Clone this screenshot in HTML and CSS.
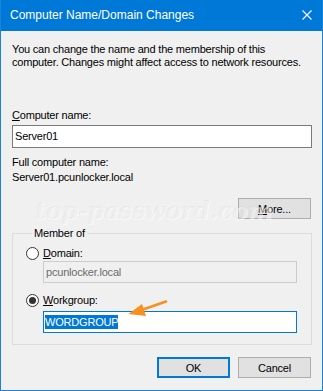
FILE: index.html
```html
<!DOCTYPE html>
<html lang="en">
<head>
    <meta charset="UTF-8">
    <title>Computer Name/Domain Changes</title>
    <link rel="stylesheet" href="styles.css">
</head>
<body>
    <div class="window">
        <div class="titlebar">
            <span class="title">Computer Name/Domain Changes</span>
            <svg class="close" width="10" height="10" viewBox="0 0 10 10">
                <path d="M0.5 0.5 L9.5 9.5 M9.5 0.5 L0.5 9.5" stroke="#fff" stroke-width="1.1" fill="none"/>
            </svg>
        </div>

        <div class="content">
            <p class="intro">You can change the name and the membership of this<br>computer. Changes might affect access to network resources.</p>

            <div class="label"><u>C</u>omputer name:</div>
            <div class="textbox">Server01</div>

            <div class="full-label">Full computer name:</div>
            <div class="full-name">Server01.pcunlocker.local</div>

            <div class="more-row">
                <button class="btn"><u>M</u>ore...</button>
            </div>

            <fieldset class="member">
                <legend>Member of</legend>
                <div class="radio-row">
                    <span class="radio"></span>
                    <span><u>D</u>omain:</span>
                </div>
                <div class="textbox field disabled">pcunlocker.local</div>

                <div class="radio-row second">
                    <span class="radio checked"></span>
                    <span><u>W</u>orkgroup:</span>
                </div>
                <div class="textbox field focused"><span class="sel">WORDGROUP</span></div>
            </fieldset>

            <div class="buttons">
                <button class="btn default">OK</button>
                <button class="btn">Cancel</button>
            </div>
        </div>

        <div class="watermark">top-password.com</div>

        <svg class="arrow" width="323" height="391" viewBox="0 0 323 391">
            <path d="M143 309.5 L166 301.5" stroke="#f7901e" stroke-width="2.6" stroke-linecap="round"/>
            <polygon points="128.5,314 142,304 146,316" fill="#f7901e"/>
        </svg>
    </div>
</body>
</html>
```

FILE: styles.css
```css
body {
    margin: 0;
    padding: 0;
    font-family: 'Liberation Sans', Arial, sans-serif;
    background-color: #f0f0f0;
}
.window {
    position: relative;
    width: 323px;
    height: 391px;
    box-sizing: border-box;
    border: 1px solid #1883d7;
    border-top: none;
    background-color: #f0f0f0;
    overflow: hidden;
}
.titlebar {
    height: 31px;
    margin: 0 -1px;
    background-color: #0078d7;
    display: flex;
    align-items: center;
    justify-content: space-between;
    padding: 0 11px 0 10px;
    color: #ffffff;
}
.title {
    font-size: 12px;
    line-height: 31px;
}
.close {
    margin-top: -1px;
}
.content {
    padding: 0 10px 0 11px;
    font-size: 11px;
    line-height: 13px;
    letter-spacing: -0.2px;
    color: #000;
    white-space: nowrap;
}
.intro {
    margin: 12px 0 0 0;
}
.label {
    margin-top: 40px;
}
.textbox {
    height: 23px;
    box-sizing: border-box;
    margin-top: 3px;
    border: 1px solid #7a7a7a;
    background-color: #ffffff;
    padding: 0 2px;
    line-height: 21px;
}
.full-label {
    margin-top: 8px;
}
.full-name {
    margin-top: 2px;
}
.more-row {
    display: flex;
    justify-content: flex-end;
    margin-top: 14px;
    padding-right: 1px;
}
.btn {
    width: 73px;
    height: 21px;
    box-sizing: border-box;
    border: 1px solid #adadad;
    background-color: #e1e1e1;
    font-family: 'Liberation Sans', Arial, sans-serif;
    font-size: 11px;
    letter-spacing: -0.2px;
    color: #000;
    padding: 0;
}
.btn.default {
    border: 2px solid #0078d7;
}
.member {
    margin: 8px 0 0 0;
    padding: 7px 13px 11px 13px;
    border: 1px solid #dcdcdc;
    width: 300px;
    box-sizing: border-box;
}
.member legend {
    padding: 0 2px;
    margin-left: 6px;
    line-height: 13px;
}
.radio-row {
    display: flex;
    align-items: center;
    gap: 4px;
    height: 13px;
}
.radio-row.second {
    margin-top: 11px;
}
.radio {
    width: 13px;
    height: 13px;
    box-sizing: border-box;
    border: 1px solid #333;
    border-radius: 50%;
    background-color: #fff;
    display: flex;
    align-items: center;
    justify-content: center;
}
.radio.checked::after {
    content: "";
    width: 7px;
    height: 7px;
    border-radius: 50%;
    background-color: #333;
}
.field {
    width: 254px;
    height: 22px;
    margin-left: 17px;
    margin-top: 1px;
    line-height: 20px;
}
.disabled {
    border-color: #cccccc;
    background-color: #f0f0f0;
    color: #6d6d6d;
}
.focused {
    margin-top: 4px;
    border-color: #0078d7;
    padding-left: 1px;
}
.sel {
    background-color: #0078d7;
    color: #fff;
    padding: 1px 0;
}
.buttons {
    display: flex;
    justify-content: flex-end;
    gap: 8px;
    margin-top: 12px;
    padding-right: 1px;
}
.watermark {
    position: absolute;
    left: 34px;
    top: 196px;
    font-family: 'DejaVu Serif', serif;
    font-weight: bold;
    font-style: italic;
    font-size: 24px;
    letter-spacing: -0.4px;
    color: rgba(0, 0, 0, 0.05);
    text-shadow: 1px 1px 0 rgba(255, 255, 255, 0.5);
    pointer-events: none;
}
.arrow {
    position: absolute;
    left: -1px;
    top: 0;
    pointer-events: none;
}
```
